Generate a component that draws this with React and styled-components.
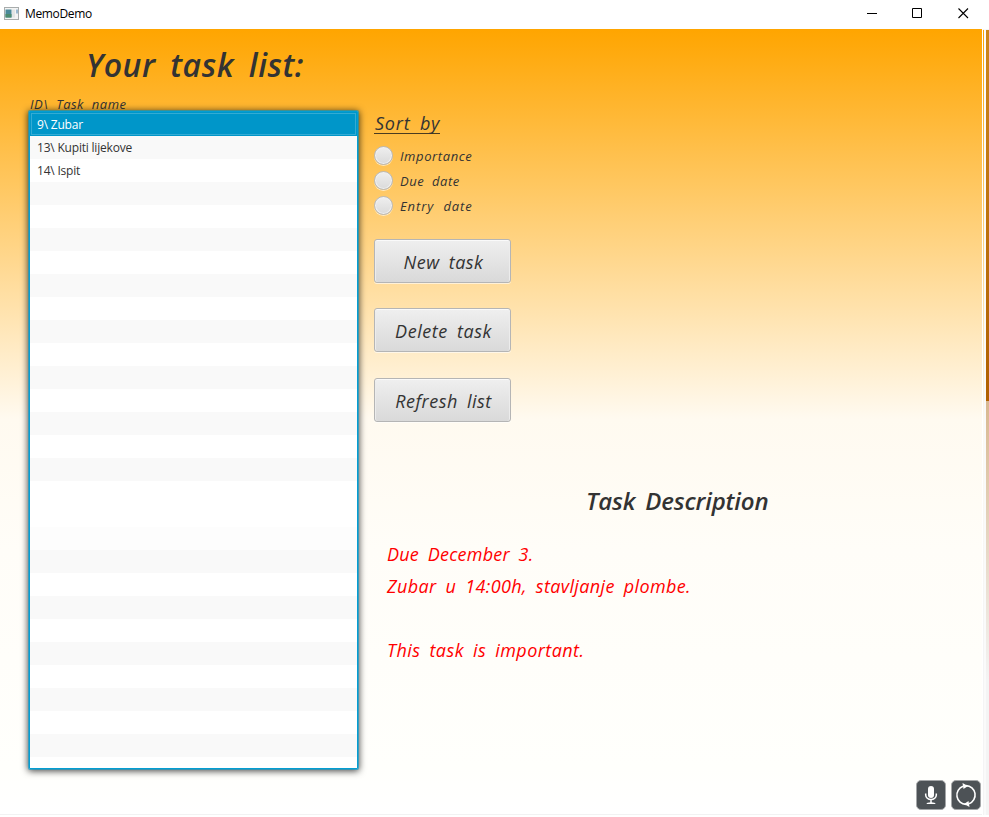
import React from 'react';
import styled, { createGlobalStyle } from 'styled-components';

const Global = createGlobalStyle`
  * { box-sizing: border-box; }
  body { margin: 0; background: #fff; overflow: hidden; }
`;

const Window = styled.div`
  width: 989px;
  height: 817px;
  display: flex;
  flex-direction: column;
  background: #fff;
  color: #333;
  font-family: 'Open Sans', sans-serif;
`;

const TitleBar = styled.header`
  height: 29px;
  flex: none;
  display: flex;
  align-items: center;
  padding: 0 3px 3px 4px;
  color: #000;
`;

const AppName = styled.span`
  flex: 1;
  margin: 2px 0 0 6px;
  font: 12px/16px 'Open Sans', sans-serif;
  letter-spacing: -0.35px;
`;

const Controls = styled.div`
  display: flex;
  align-items: center;
`;

const Control = styled.span`
  width: 46px;
  display: flex;
  justify-content: center;
`;

const Main = styled.div`
  height: 788px;
  display: flex;
`;

const Client = styled.main`
  width: 982px;
  height: 786px;
  display: flex;
  padding-left: 28px;
  border-bottom: 1px solid #f2f2f2;
  background: linear-gradient(#ffa500 0, #fffaf0 390px, #fffdf8 520px, #fffffc 740px, #fff 785px);
`;

const Edge = styled.div`
  width: 7px;
  height: 786px;
  display: flex;
  background: #f4f4f4;
`;

const EdgeLine = styled.i`
  width: ${(p) => p.$w}px;
  margin-top: ${(p) => p.$top || 0}px;
  background: ${(p) => p.$bg};
`;

const ListColumn = styled.section`
  width: 331px;
  display: flex;
  flex-direction: column;
`;

const Script = styled.span`
  display: block;
  white-space: pre;
  font-family: 'Open Sans', sans-serif;
  font-style: italic;
  font-weight: ${(p) => p.$weight || 400};
  font-size: ${(p) => p.$size}px;
  line-height: ${(p) => p.$line}px;
  letter-spacing: ${(p) => p.$track || 0}px;
  word-spacing: ${(p) => p.$gap || 0}px;
`;

const Heading = styled.h1`
  margin: 14px 0 0 58px;
  height: 52px;
`;

const ListLabel = styled.div`
  height: 16px;
  padding-left: 2px;
`;

const TaskList = styled.ul`
  list-style: none;
  margin: 0 0 0 1px;
  padding: 0;
  width: 329px;
  height: 658px;
  border: 1px solid #039ed3;
  border-radius: 1px;
  background: #fff;
  box-shadow: 0 0 0 1px rgba(3, 158, 211, 0.6), 0 1px 7px 1px rgba(0, 0, 0, 0.75);
  overflow: hidden;
`;

const Row = styled.li`
  height: ${(p) => (p.$selected ? 24 : 23)}px;
  padding-left: ${(p) => (p.$selected ? 6 : 7)}px;
  font: 12px/23px 'Open Sans', sans-serif;
  letter-spacing: -0.2px;
  color: ${(p) => (p.$selected ? '#fff' : '#333')};
  background: ${(p) => p.$bg};
  border: ${(p) => (p.$selected ? '1px solid #0096c9' : 'none')};
  box-shadow: ${(p) => (p.$selected ? 'inset 0 0 0 1px #33abd4' : 'none')};
`;

const Side = styled.section`
  width: 607px;
  margin-left: 15px;
  display: flex;
  flex-direction: column;
`;

const SortTitle = styled.div`
  margin-top: 82px;
  width: 66px;
  height: 23px;
  padding-left: 1px;
  border-bottom: 1px solid #4a3b20;
`;

const Radios = styled.div`
  display: flex;
  flex-direction: column;
  gap: 5px;
  margin-top: 12px;
`;

const RadioLabel = styled.label`
  height: 20px;
  display: flex;
  gap: 7px;
`;

const Radio = styled.i`
  width: 19px;
  height: 19px;
  border: 1px solid #b9b9b9;
  border-radius: 50%;
  background: linear-gradient(#efefef, #dadada);
  box-shadow: inset 0 0 0 1px #f0f0f0, 0 1px 0 rgba(255, 255, 255, 0.6);
`;

const Buttons = styled.div`
  margin-top: 23px;
  display: flex;
  flex-direction: column;
`;

const Button = styled.button`
  width: 137px;
  height: 44px;
  margin: 0 0 ${(p) => p.$after}px;
  padding: 1px 0 0 2px;
  display: flex;
  align-items: center;
  justify-content: center;
  color: #333;
  border: 1px solid #b5b5b5;
  border-radius: 3px;
  background: linear-gradient(#efefef, #d9d9d9);
  box-shadow: inset 0 1px 0 #fafafa, inset 1px 0 0 #ececec, inset -1px 0 0 #ececec, 0 1px 0 rgba(255, 255, 255, 0.6);
`;

const DescTitle = styled.h2`
  margin: 58px 0 0 212px;
  height: 42px;
`;

const Description = styled.div`
  margin: 16px 0 0 13px;
  height: 150px;
  color: #f00;
`;

const Tools = styled.div`
  display: flex;
  gap: 5px;
  justify-content: flex-end;
  margin-top: 92px;
`;

const Tool = styled.span`
  width: 30px;
  height: 30px;
  display: flex;
  align-items: center;
  justify-content: center;
  background: #4d5256;
  border: 1px solid #a4a6a8;
  border-radius: 5px;
`;

const tasks = ['9\\ Zubar', '13\\ Kupiti lijekove', '14\\ Ispit'];

const rows = Array.from({ length: 29 }, (_, i) => tasks[i] || '');

const rowColor = (i) => {
  if (i === 0) return '#0096c9';
  if (i === 17) return '#fff';
  if (i === 18) return '#fdfdfd';
  return i % 2 ? '#f9f9f9' : '#fff';
};

export default function App() {
  return (
    <Window>
      <Global />
      <TitleBar>
        <svg width="15" height="13" viewBox="0 0 15 13">
          <rect x=".5" y=".5" width="14" height="12" fill="#f4f4f4" stroke="#a8acac" />
          <rect x="1.5" y="2.5" width="6" height="8" fill="#4b8a9a" />
          <rect x="1.5" y="7" width="6" height="3.5" fill="#4c8b70" />
          <rect x="8" y="2.5" width="3" height="8" fill="#e2e5e5" />
          <rect x="12" y="2.5" width="2" height="4" fill="#9bb9cf" />
        </svg>
        <AppName>MemoDemo</AppName>
        <Controls>
          <Control><svg width="11" height="11"><path d="M1 5.5h10" stroke="#000" /></svg></Control>
          <Control><svg width="11" height="11"><path d="M.5.5h9v9h-9z" fill="none" stroke="#000" /></svg></Control>
          <Control><svg width="11" height="11"><path d="M.5.5l9.5 9.5m0-9.5l-9.5 9.5" stroke="#000" strokeWidth="1.1" /></svg></Control>
        </Controls>
      </TitleBar>
      <Main>
        <Client>
          <ListColumn>
            <Heading><Script $size={32} $line={44} $weight={600} $track={0.5} $gap={6}>Your task list:</Script></Heading>
            <ListLabel><Script $size={13} $line={18} $track={0.5} $gap={4}>{'ID\\ Task name'}</Script></ListLabel>
            <TaskList>
              {rows.map((text, i) => (
                <Row key={i} $selected={i === 0} $bg={rowColor(i)}>{text}</Row>
              ))}
            </TaskList>
          </ListColumn>
          <Side>
            <SortTitle><Script $size={18} $line={24} $track={0.8} $gap={4}>Sort by</Script></SortTitle>
            <Radios>
              <RadioLabel><Radio /><Script $size={13} $line={20} $track={0.6}>Importance</Script></RadioLabel>
              <RadioLabel><Radio /><Script $size={13} $line={20} $track={0.5} $gap={4}>Due date</Script></RadioLabel>
              <RadioLabel><Radio /><Script $size={13} $line={20} $track={0.9} $gap={5}>Entry date</Script></RadioLabel>
            </Radios>
            <Buttons>
              <Button $after={25}><Script $size={18} $line={24} $track={0.5} $gap={4}>New task</Script></Button>
              <Button $after={26}><Script $size={18} $line={24} $track={0.55} $gap={4}>Delete task</Script></Button>
              <Button $after={0}><Script $size={18} $line={24} $track={0.5} $gap={4}>Refresh list</Script></Button>
            </Buttons>
            <DescTitle><Script $size={24} $line={42} $weight={600} $track={-0.15} $gap={4}>Task Description</Script></DescTitle>
            <Description>
              <Script $size={18} $line={32} $track={0.2} $gap={4}>Due December 3.</Script>
              <Script $size={18} $line={32} $track={0.36} $gap={4}>Zubar u 14:00h, stavljanje plombe.</Script>
              <Script $size={18} $line={32}> </Script>
              <Script $size={18} $line={32} $track={0.43} $gap={4}>This task is important.</Script>
            </Description>
            <Tools>
              <Tool>
                <svg width="14" height="20" viewBox="0 0 14 20">
                  <rect x="4" y="1" width="6" height="12" rx="3" fill="#fff" />
                  <path d="M1.7 8.5v1.5a5.3 4.6 0 0 0 10.6 0V8.5M7 14.5v3.5" fill="none" stroke="#fff" strokeWidth="1.5" />
                  <path d="M2.5 19q0-1.8 4.5-1.8t4.5 1.8z" fill="#fff" />
                </svg>
              </Tool>
              <Tool>
                <svg width="24" height="26" viewBox="0 0 24 26">
                  <path d="M9 4.2a9.4 9.4 0 0 0 3 18.2M15 21.8a9.4 9.4 0 0 0-3-18.2" fill="none" stroke="#fff" strokeWidth="1.6" />
                  <path d="M8.5 1l5.5 3-4.5 3zM15.500 25l-5.500-3 4.500-3z" fill="#fff" />
                </svg>
              </Tool>
            </Tools>
          </Side>
        </Client>
        <Edge>
          <EdgeLine $w={1} $bg="#fff" />
          <EdgeLine $w={1} $top={1} $bg="linear-gradient(#ffa500 0, #fffaf0 390px, #f4f4f4 600px)" />
          <EdgeLine $w={2} $bg="#fafafa" />
          <EdgeLine $w={3} $top={1} $bg="linear-gradient(#cc861c 0, #b06000 371px, #d8b890 371px, #f4f4f4 650px)" />
        </Edge>
      </Main>
    </Window>
  );
}
